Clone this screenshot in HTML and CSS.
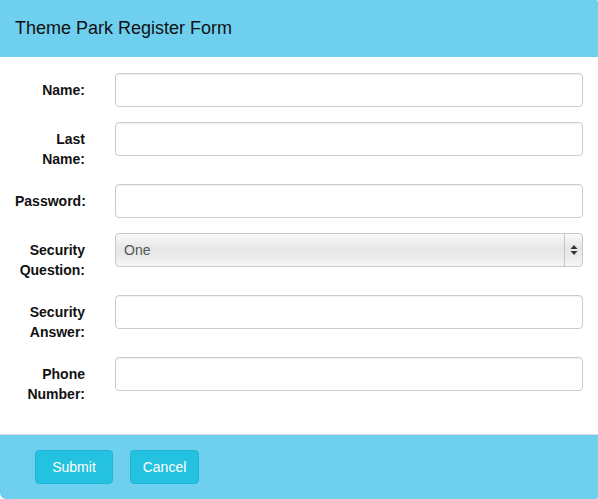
FILE: index.html
```html
<!DOCTYPE html>
<html>
<head>
<meta charset="utf-8">
<link rel="stylesheet" href="styles.css">
</head>
<body>
<div class="card">
  <div class="card-header">Theme Park Register Form</div>
  <form class="card-body">
    <div class="row"><label class="lbl">Name:</label><input class="ctrl" type="text"></div>
    <div class="row"><label class="lbl">Last Name:</label><input class="ctrl" type="text"></div>
    <div class="row"><label class="lbl">Password:</label><input class="ctrl" type="password"></div>
    <div class="row"><label class="lbl">Security Question:</label>
      <div class="select"><span class="sel-text">One</span>
        <span class="sel-arrows"><svg width="8" height="12" viewBox="0 0 8 12"><path d="M4 1 L7.5 5 L0.5 5 Z" fill="#333"/><path d="M4 11 L7.5 7 L0.5 7 Z" fill="#333"/></svg></span>
      </div>
    </div>
    <div class="row"><label class="lbl">Security Answer:</label><input class="ctrl" type="text"></div>
    <div class="row"><label class="lbl">Phone Number:</label><input class="ctrl" type="text"></div>
  </form>
  <div class="card-footer">
    <button class="btn btn-submit" type="button">Submit</button>
    <button class="btn btn-cancel" type="button">Cancel</button>
  </div>
</div>
</body>
</html>
```
FILE: styles.css
```css
html, body { margin: 0; padding: 0; background: #fff; }
body { font-family: "Liberation Sans", Arial, Helvetica, sans-serif; font-size: 14px; line-height: 20px; color: #000; }
.card { width: 598px; height: 499px; overflow: hidden; border-radius: 0 2px 2px 6px; background: #fff; display: flex; flex-direction: column; }
.card-header { height: 57px; box-sizing: border-box; background: #6fcfee; padding: 16px 15px 0; font-size: 18px; line-height: 24px; color: #111; }
.card-body { margin: 0; padding: 16px 15px 15px; }
.row { display: flex; align-items: flex-start; gap: 30px; margin-bottom: 15px; }
.lbl { width: 70px; flex: none; text-align: right; font-weight: bold; padding-top: 7px; color: #111; }
.ctrl { flex: 1; height: 34px; box-sizing: border-box; border: 1px solid #ccc; border-radius: 4px; background: #fff; margin: 0; padding: 6px 8px; font: inherit; box-shadow: inset 0 1px 1px rgba(0,0,0,0.06); }
.select { flex: 1; height: 34px; box-sizing: border-box; border: 1px solid #c8c8c8; border-radius: 4px; display: flex; align-items: stretch; background: linear-gradient(#fafafa 0%, #e6e6e6 45%, #ebebeb 70%, #f6f6f6 100%); }
.sel-text { flex: 1; padding: 6px 8px; color: #555; line-height: 20px; }
.sel-arrows { width: 17px; border-left: 1px solid #c4c4c4; display: flex; align-items: center; justify-content: center; }
.card-footer { flex: 1; background: #6fcfee; border-top: 1px solid #ddd; padding: 15px 20px 0 35px; display: flex; align-items: flex-start; gap: 17px; }
.btn { height: 34px; box-sizing: border-box; background: #25c1e0; border: 1px solid #1fb5d6; border-radius: 4px; color: #fff; font: inherit; padding: 6px 0; margin: 0; text-align: center; }
.btn-submit { width: 78px; }
.btn-cancel { width: 69px; }
```
